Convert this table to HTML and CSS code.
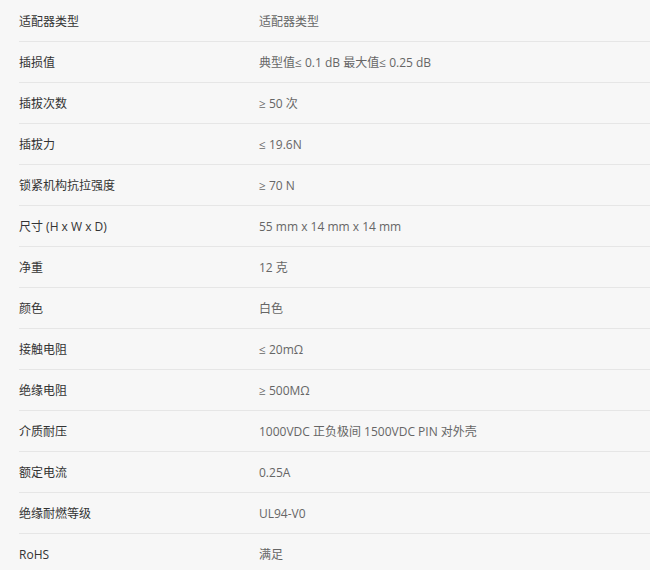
FILE: index.html
```html
<!DOCTYPE html>
<html lang="zh-CN">
<head>
<meta charset="utf-8">
<link rel="stylesheet" href="styles.css">
</head>
<body>
<div class="specs">
  <div class="row"><div class="k">适配器类型</div><div class="v">适配器类型</div></div>
  <div class="row"><div class="k">插损值</div><div class="v">典型值≤ 0.1 dB 最大值≤ 0.25 dB</div></div>
  <div class="row"><div class="k">插拔次数</div><div class="v">≥ 50 次</div></div>
  <div class="row"><div class="k">插拔力</div><div class="v">≤ 19.6N</div></div>
  <div class="row"><div class="k">锁紧机构抗拉强度</div><div class="v">≥ 70 N</div></div>
  <div class="row"><div class="k">尺寸 (H x W x D)</div><div class="v">55 mm x 14 mm x 14 mm</div></div>
  <div class="row"><div class="k">净重</div><div class="v">12 克</div></div>
  <div class="row"><div class="k">颜色</div><div class="v">白色</div></div>
  <div class="row"><div class="k">接触电阻</div><div class="v">≤ 20mΩ</div></div>
  <div class="row"><div class="k">绝缘电阻</div><div class="v">≥ 500MΩ</div></div>
  <div class="row"><div class="k">介质耐压</div><div class="v">1000VDC 正负极间 1500VDC PIN 对外壳</div></div>
  <div class="row"><div class="k">额定电流</div><div class="v">0.25A</div></div>
  <div class="row"><div class="k">绝缘耐燃等级</div><div class="v">UL94-V0</div></div>
  <div class="row"><div class="k">RoHS</div><div class="v">满足</div></div>
</div>
</body>
</html>
```
FILE: styles.css
```css
html, body {
  margin: 0;
  padding: 0;
  background: #f7f7f7;
}
body {
  font-family: "Open Sans", "Noto Sans CJK SC", sans-serif;
  font-size: 12px;
}
.specs {
  padding-left: 19px;
  padding-top: 1px;
}
.row {
  display: flex;
  align-items: center;
  box-sizing: border-box;
  height: 41px;
  border-bottom: 1px solid #e6e6e6;
}
.k {
  width: 240px;
  color: #333;
}
.v {
  color: #666;
}
```
